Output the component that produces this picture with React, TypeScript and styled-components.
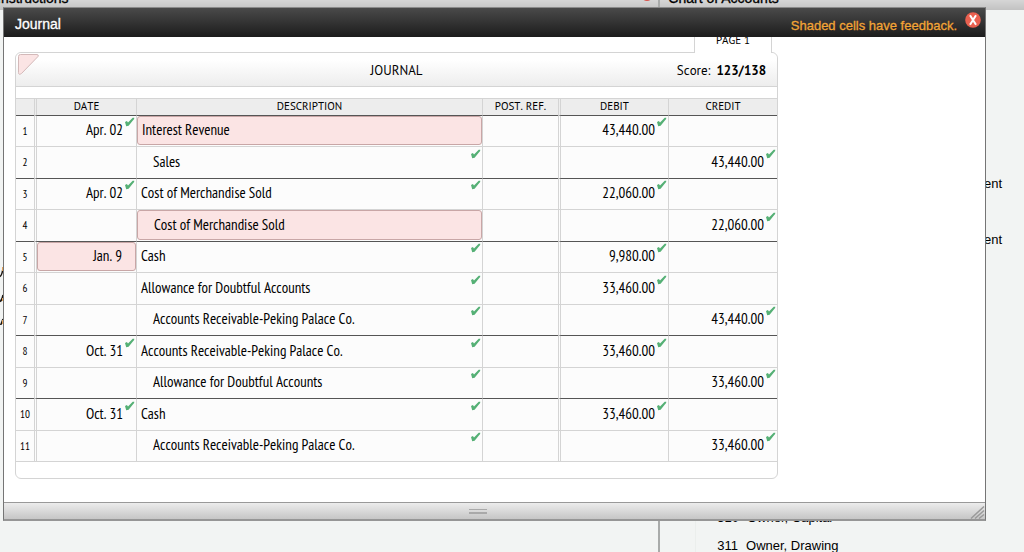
import React from 'react';
import styled, { createGlobalStyle } from 'styled-components';

const arial = '"Liberation Sans", Arial, sans-serif';
const ptSans = '"PT Sans", "Open Sans", sans-serif';
const ptNarrow = '"PT Sans Narrow", "Roboto Condensed", "Open Sans", sans-serif';
const line = '#d4d4d4';
const rule = '#555';

const GlobalStyle = createGlobalStyle`
  * { box-sizing: border-box; }
  body { margin: 0; background: #f2f4f3; color: #000; font-family: ${arial}; }
`;

const Page = styled.div`
  position: relative;
  min-height: 100vh;
  display: grid;
  grid-template-columns: 9fr 5fr;
  overflow: hidden;
`;

const Pane = styled.section`
  height: 100vh;
  overflow: hidden;
  & + & { border-left: 2px solid #a9abaa; }
`;

const PaneBar = styled.header`
  display: flex;
  justify-content: space-between;
  align-items: flex-end;
  height: 10px;
  padding: 0 5px 4px 8px;
  overflow: hidden;
  background: linear-gradient(#d6d6d6, #c2c2c2);
`;

const PaneTitle = styled.h2<{ $shift?: boolean }>`
  margin: 0 0 0 ${p => (p.$shift ? '-11px' : '0')};
  font-size: 14px;
  line-height: 16px;
  font-weight: 400;
  -webkit-text-stroke: 0.3px #000;
`;

const Dot = styled.span`
  width: 12px;
  height: 12px;
  margin-bottom: 5px;
  border-radius: 50%;
  background: #d9534a;
`;

const Sliver = styled.svg`
  display: block;
  width: 4px;
  height: 64px;
  margin-top: 251px;
`;

const Accounts = styled.ul`
  display: grid;
  grid-template-columns: 1fr auto;
  grid-template-rows: repeat(9, 28px) 26px;
  grid-auto-rows: 28px;
  align-items: center;
  height: 100%;
  margin: 0 0 0 35px;
  padding: 19px 22px 0 21px;
  border-left: 1px solid #ebeeec;
  list-style: none;
  font-size: 13px;
`;

const Account = styled.li<{ $row: number; $end?: boolean }>`
  grid-row: ${p => p.$row};
  grid-column: ${p => (p.$end ? 2 : 1)};
  justify-self: ${p => (p.$end ? 'end' : 'start')};
  display: flex;
  gap: 8px;
  white-space: nowrap;
`;

const Window = styled.main`
  position: absolute;
  top: 7px;
  left: 3px;
  right: 38px;
  border: 1px solid #757575;
  border-top-color: #8a8a8a;
  border-bottom: 2px solid #969696;
  background: #fff;
`;

const TitleBar = styled.header`
  display: flex;
  align-items: center;
  height: 29px;
  padding: 0 4px 0 11px;
  color: #fff;
  background: linear-gradient(#4a4a4a, #1c1c1c);
`;

const Title = styled.h1`
  flex: 1;
  margin: 0;
  padding-top: 3px;
  font-size: 14px;
  line-height: 16px;
  font-weight: 400;
  -webkit-text-stroke: 0.3px #fff;
`;

const Notice = styled.p`
  margin: 0;
  padding-top: 6px;
  font-size: 13px;
  line-height: 16px;
  color: #f2a436;
  -webkit-text-stroke: 0.3px #f2a436;
`;

const Close = styled.button`
  display: block;
  width: 16px;
  height: 16px;
  margin: 0 0 5px 8px;
  padding: 0;
  border: 0;
  background: none;
  cursor: pointer;
  svg { display: block; }
`;

const Body = styled.div`
  overflow: hidden;
  padding: 0 11px 23px;
`;

const Sheet = styled.div`
  display: flex;
  flex-direction: column;
  max-width: 763px;
`;

const PageTab = styled.div`
  position: relative;
  align-self: flex-end;
  display: flex;
  align-items: flex-end;
  justify-content: center;
  width: 78px;
  height: 16px;
  margin: 0 6px -1px 0;
  padding-bottom: 6px;
  overflow: hidden;
  border: solid ${line};
  border-width: 0 1px;
  background: #fff;
  font: 11px/14px ${ptSans};
  font-kerning: none;
`;

const Card = styled.section`
  padding-bottom: 16px;
  border: 1px solid ${line};
  border-radius: 6px;
`;

const CardHead = styled.header`
  display: grid;
  grid-template-columns: 1fr auto 1fr;
  align-items: center;
  height: 34px;
  margin-bottom: 11px;
  border-bottom: 1px solid ${line};
  border-radius: 6px 6px 0 0;
  background: linear-gradient(#fff 20%, #ededed);
  font: 13px/16px ${ptSans};
  font-kerning: none;
`;

const Corner = styled.svg`
  align-self: start;
  width: 22px;
  height: 22px;
  margin-left: 1px;
`;

const CardTitle = styled.h2`
  margin: 0;
  padding-top: 2px;
  font: inherit;
`;

const Score = styled.p`
  display: flex;
  justify-content: flex-end;
  gap: 6px;
  margin: 0;
  padding: 2px 11px 0 0;
`;

const Ledger = styled.table`
  width: 100%;
  table-layout: fixed;
  border-collapse: separate;
  border-spacing: 0;
  background: #fcfcfc;
  font: 15px/18px ${ptNarrow};
  font-kerning: none;
`;

const Col = styled.col<{ $w?: number }>`
  width: ${p => (p.$w ? `${p.$w}px` : 'auto')};
`;

type Edge = { $double?: boolean; $right?: boolean };

const HeadCell = styled.th<Edge>`
  height: 18px;
  padding: 0;
  border: 0 solid ${line};
  border-top-width: 1px;
  border-right-width: ${p => (p.$right ? '1px' : '0')};
  border-left: ${p => (p.$double ? `3px double ${line}` : '0')};
  border-bottom: 1px solid ${rule};
  background: #ededed;
  font: 11px/15px ${ptSans};
  font-kerning: none;
  vertical-align: top;
`;

const Row = styled.tr<{ $last?: boolean }>`
  --entry: 29px;
  --tick: 1px;
  --lift: 2px;
  height: 31px;
  &:nth-child(even) { --entry: 30px; --tick: 2px; --lift: 0px; height: 32px; }
  > * { border-bottom: 1px solid ${p => (p.$last ? rule : line)}; }
`;

const Cell = styled.td<Edge>`
  position: relative;
  padding: 0;
  vertical-align: top;
  border-right: ${p => (p.$right ? `1px solid ${line}` : '0')};
  border-left: ${p => (p.$double ? `3px double ${line}` : '0')};
`;

const RowNumber = styled.th`
  padding: 0;
  font: 11px/30px ${ptNarrow};
  vertical-align: top;
`;

const Entry = styled.div<{ $wrong?: boolean; $indent?: boolean; $number?: boolean }>`
  display: flex;
  align-items: center;
  justify-content: ${p => (p.$number ? 'flex-end' : 'flex-start')};
  height: var(--entry);
  padding: 0 13px var(--lift) ${p => (p.$indent ? '16px' : '4px')};
  border: ${p => (p.$wrong ? '1px solid #c8a6a6' : '0')};
  border-radius: 3px;
  background: ${p => (p.$wrong ? '#fbe4e4' : 'transparent')};
  white-space: nowrap;
`;

const Tick = styled.svg`
  position: absolute;
  top: var(--tick);
  right: 1px;
  width: 10px;
  height: 10px;
`;

const Grip = styled.footer`
  display: grid;
  grid-template-columns: 1fr auto 1fr;
  align-items: center;
  height: 17px;
  border-top: 1px solid #999;
  background: linear-gradient(#ececec, #c6c6c6);
`;

const GripBars = styled.span`
  grid-column: 2;
  width: 18px;
  height: 5px;
  margin-right: 34px;
  border: solid #a9a9a9;
  border-width: 1px 0 2px;
`;

const Resize = styled.svg`
  justify-self: end;
  align-self: end;
  width: 15px;
  height: 14px;
`;

type Value = { text: string; wrong?: boolean; indent?: boolean };
type Line = { date?: Value; description: Value; debit?: string; credit?: string; last?: boolean };

const lines: Line[] = [
  { date: { text: 'Apr. 02' }, description: { text: 'Interest Revenue', wrong: true }, debit: '43,440.00' },
  { description: { text: 'Sales', indent: true }, credit: '43,440.00', last: true },
  { date: { text: 'Apr. 02' }, description: { text: 'Cost of Merchandise Sold' }, debit: '22,060.00' },
  { description: { text: 'Cost of Merchandise Sold', wrong: true, indent: true }, credit: '22,060.00', last: true },
  { date: { text: 'Jan. 9', wrong: true }, description: { text: 'Cash' }, debit: '9,980.00' },
  { description: { text: 'Allowance for Doubtful Accounts' }, debit: '33,460.00' },
  { description: { text: 'Accounts Receivable-Peking Palace Co.', indent: true }, credit: '43,440.00', last: true },
  { date: { text: 'Oct. 31' }, description: { text: 'Accounts Receivable-Peking Palace Co.' }, debit: '33,460.00' },
  { description: { text: 'Allowance for Doubtful Accounts', indent: true }, credit: '33,460.00', last: true },
  { date: { text: 'Oct. 31' }, description: { text: 'Cash' }, debit: '33,460.00' },
  { description: { text: 'Accounts Receivable-Peking Palace Co.', indent: true }, credit: '33,460.00' },
];

function Field({ value, number, ...edge }: { value?: Value; number?: boolean } & Edge) {
  return (
    <Cell {...edge}>
      {value && (
        <Entry $wrong={value.wrong} $indent={value.indent} $number={number}>{value.text}</Entry>
      )}
      {value && !value.wrong && (
        <Tick viewBox="0 0 10 10" role="img" aria-label="Correct">
          <path d="M0 5 1.900 4 3 5.600 7.700.8 9.300.8 9.100 2 3.600 8.800 1.200 9.200Z" fill="#55b075" />
        </Tick>
      )}
    </Cell>
  );
}

export default function App() {
  return (
    <>
      <GlobalStyle />
      <Page>
        <Pane>
          <PaneBar>
            <PaneTitle $shift>Instructions</PaneTitle>
            <Dot />
          </PaneBar>
          <Sliver viewBox="0 0 4 64" aria-hidden="true">
            <path d="M0 15.500Q2 14.500 3 7M0 40.500Q2 39.500 3 34M0 66 3 58" fill="none" stroke="#1a1410" strokeWidth="1.500" />
            <path d="M2.500 10V6M2.500 40v-3M2.500 63v-4" stroke="#e5a45c" />
          </Sliver>
        </Pane>
        <Pane>
          <PaneBar>
            <PaneTitle>Chart of Accounts</PaneTitle>
          </PaneBar>
          <Accounts>
            <Account $row={6} $end>Equipment</Account>
            <Account $row={8} $end>Equipment</Account>
            <Account $row={18}><span>310</span><span>Owner, Capital</span></Account>
            <Account $row={19}><span>311</span><span>Owner, Drawing</span></Account>
          </Accounts>
        </Pane>
        <Window>
          <TitleBar>
            <Title>Journal</Title>
            <Notice>Shaded cells have feedback.</Notice>
            <Close type="button" aria-label="Close">
              <svg width="16" height="16" viewBox="0 0 16 16">
                <circle cx="8" cy="8" r="7.800" fill="#e9604f" />
                <path d="M5 3.200 11 12.800M11 3.200 5 12.800" stroke="#fff" strokeWidth="2" />
              </svg>
            </Close>
          </TitleBar>
          <Body>
            <Sheet>
              <PageTab>PAGE 1</PageTab>
              <Card>
                <CardHead>
                  <Corner viewBox="0 0 22 22" aria-hidden="true">
                    <path d="M3.500 1.500H20Q22 1.500 21 3.500L4.500 20.500Q1.500 22.500 1.500 19.500V3.500Q1.500 1.500 3.500 1.500Z" fill="#fbe4e4" stroke="#d3b9b9" />
                  </Corner>
                  <CardTitle>JOURNAL</CardTitle>
                  <Score>Score: <strong>123/138</strong></Score>
                </CardHead>
                <Ledger>
                  <colgroup>
                    <Col $w={18} /><Col $w={103} /><Col /><Col $w={75} /><Col $w={111} /><Col $w={108} />
                  </colgroup>
                  <thead>
                    <tr>
                      <HeadCell />
                      <HeadCell $double $right>DATE</HeadCell>
                      <HeadCell $right>DESCRIPTION</HeadCell>
                      <HeadCell>POST. REF.</HeadCell>
                      <HeadCell $double $right>DEBIT</HeadCell>
                      <HeadCell>CREDIT</HeadCell>
                    </tr>
                  </thead>
                  <tbody>
                    {lines.map((l, i) => (
                      <Row key={i} $last={l.last}>
                        <RowNumber scope="row">{i + 1}</RowNumber>
                        <Field value={l.date} number $double $right />
                        <Field value={l.description} $right />
                        <Field />
                        <Field value={l.debit ? { text: l.debit } : undefined} number $double $right />
                        <Field value={l.credit ? { text: l.credit } : undefined} number />
                      </Row>
                    ))}
                  </tbody>
                </Ledger>
              </Card>
            </Sheet>
          </Body>
          <Grip>
            <GripBars />
            <Resize viewBox="0 0 15 14" aria-hidden="true">
              <path d="M1 13.500 14 1.500M5 13.500 14 5.500M9 13.500 14 9.500" stroke="#9a9a9a" strokeWidth="1.500" />
            </Resize>
          </Grip>
        </Window>
      </Page>
    </>
  );
}
